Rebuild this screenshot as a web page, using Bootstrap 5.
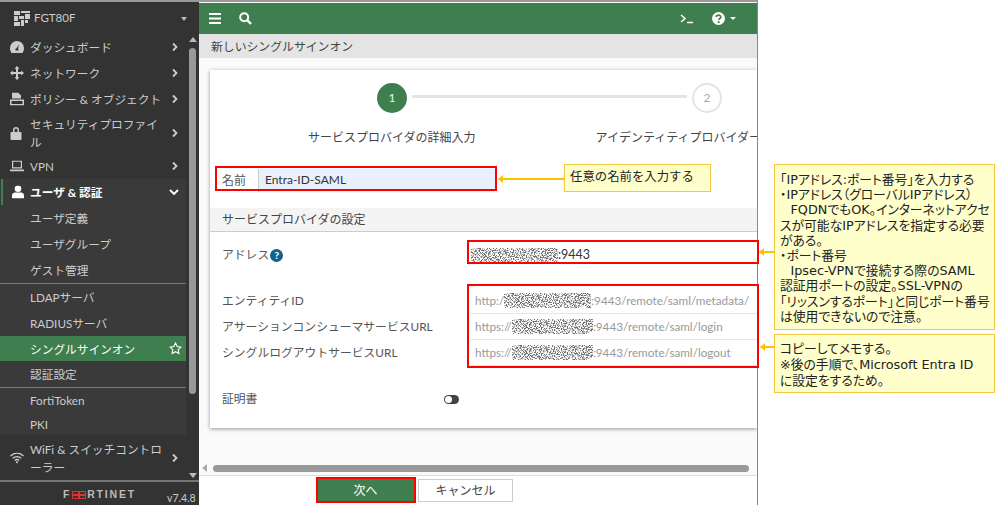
<!DOCTYPE html>
<html lang="ja">
<head>
<meta charset="utf-8">
<title>新しいシングルサインオン</title>
<link rel="stylesheet" href="https://cdn.jsdelivr.net/npm/bootstrap@5.3.0/dist/css/bootstrap.min.css">
<style>
html,body{height:505px;overflow:hidden;}
body{font-family:"Lato","Noto Sans CJK JP",sans-serif;font-size:12px;color:#444;background:#fff;position:relative;}
.shot{height:505px;}
.side{width:199px;height:505px;background:#333;border-top:2px solid #999;color:#ccc;flex:none;position:relative;}
.side-head{height:32px;padding-left:14px;gap:4px;font-size:11.5px;color:#ccc;}
.side-head .caret-d{margin-left:auto;margin-right:12px;width:0;height:0;border:3.5px solid transparent;border-top:4px solid #bbb;margin-top:4px;}
.menu{width:186px;}
.mi{padding:0 24px 0 30px;position:relative;line-height:18px;color:#ccc;height:26px;font-size:11.7px;}
.mi svg.ic{position:absolute;left:10px;top:50%;transform:translateY(-50%);fill:#ccc;}
.mi .chev{position:absolute;right:7px;top:50%;transform:translateY(-50%);}
.h2l{height:41px;}
.h2w{height:45px;}
.subbox{background:#3a3a3a;}
.mi.open{color:#fff;font-weight:700;border-left:2px solid #3f7f4f;margin-left:1px;padding-left:27px;}
.mi.open svg.ic{left:9px;fill:#fff;}
.sub-sep{border-top:1px solid #777;}
.mi.on{background:#3f7e4e;color:#fff;height:25px;}
.mi.s24{height:24px;}
.mi.s23{height:23px;}
.star{position:absolute;right:4px;top:6px;}
.vbar{position:absolute;left:188px;top:32px;width:9px;height:444px;}
.vup{position:absolute;left:1px;top:3px;width:0;height:0;border:4px solid transparent;border-bottom:5px solid #bbb;border-top:0;}
.vdn{position:absolute;left:1px;bottom:0;width:0;height:0;border:4px solid transparent;border-top:5px solid #bbb;border-bottom:0;}
.vth{position:absolute;left:1px;top:14px;width:7px;height:346px;background:#999;border-radius:4px;}
.side-foot{position:absolute;left:0;right:0;top:478px;height:25px;border-top:2px solid #777;}
.ftn{position:absolute;left:63px;top:5px;font-family:"Liberation Sans",sans-serif;font-weight:700;font-size:10.5px;letter-spacing:1.8px;color:#bbb;line-height:14px;}
.ftn i{display:inline-block;width:14px;height:8px;background:linear-gradient(#d33,#d33) center/100% 2px no-repeat,linear-gradient(#d33,#d33) center/2px 100% no-repeat;border:1.5px solid #d33;vertical-align:-0.5px;margin:0 1px;}
.ver{position:absolute;left:167px;top:10px;font-size:10.5px;color:#ccc;line-height:13px;}
.mainp{width:559px;height:505px;flex:none;border-top:2px solid #999;border-right:1px solid #888;background:#fafafa;position:relative;overflow:hidden;}
.topb{height:31px;background:#3f7e4e;margin-top:1px;padding-left:10px;color:#fff;}
.i-search{margin-left:18px;}
.i-term{margin-left:428px;}
.i-help{margin-left:18px;}
.i-caret{margin:3px 0 0 5px;border:3px solid transparent;border-top:3.5px solid #fff;}
.crumb{height:24px;background:#e4e4e4;padding:2px 0 0 12px;font-size:11.85px;color:#444;}
.work{height:418px;padding:12px 0 0 11px;}
.wizard{height:358px;background:#fff;box-shadow:0 1px 4px rgba(0,0,0,.4);overflow:hidden;}
.stepline{height:30px;margin-top:13px;padding-left:167px;}
.circ{width:30px;height:30px;border-radius:50%;flex:none;font-size:12px;}
.circ.act{background:#3f7e4e;color:#dfe;}
.circ.idle{border:2.5px solid #e4e4e4;color:#aaa;background:#fff;}
.conn{width:275px;height:3px;background:#e4e4e4;margin:0 5px 4px;flex:none;}
.steplab{height:18px;margin-top:16px;white-space:nowrap;font-size:12px;color:#444;line-height:18px;}
.steplab span:first-child{margin-left:98px;width:170px;text-align:center;}
.steplab span+span{margin-left:120px;}
.namerow{height:23px;margin:22px 0 0 12px;width:284px;}
.namerow label{width:36px;padding-top:3px;color:#555;margin:0;}
.inp-name{width:237px;height:23px;background:#e8f0fe;border:0;border-left:1px solid #ccc;border-radius:0;padding:0 0 2px 6px;font-size:12px;color:#333;box-shadow:none;font-family:inherit;}
.sec{height:24px;margin-top:16px;background:#f4f4f4;border-bottom:1px solid #ccc;padding-left:12px;line-height:24px;color:#444;font-size:12px;}
.frow{height:26px;padding-left:12px;}
.frow.addr{margin-top:11px;height:24px;}
.frow.cert{margin-top:20px;}
.gap-url{height:21px;}
.frow .lb{width:248px;flex:none;color:#555;font-size:11.8px;white-space:nowrap;}
.frow .val{width:290px;flex:none;height:100%;border-bottom:1px solid #e6e6e6;padding-left:5px;color:#999;font-size:11.7px;font-family:"Lato",sans-serif;white-space:nowrap;}
.addr .val{border:0;color:#333;font-size:12.5px;padding-left:1px;}
.noise{display:inline-block;flex:none;}
.ques{width:13px;height:13px;border-radius:50%;background:#13618f;color:#fff;font-size:10px;font-weight:900;line-height:13px;text-align:center;margin-left:1px;}
.tog{width:15px;height:9px;border-radius:6px;background:#444;margin-left:187px;padding:1px;}
.tog i{display:block;width:7px;height:7px;border-radius:50%;background:#fff;}
.hbar{height:10px;margin-top:35px;padding-left:3px;margin-left:-11px;}
.hbar b{display:block;width:0;height:0;border:4px solid transparent;border-right:5px solid #aaa;border-left:0;}
.hbar i{display:block;width:536px;height:7px;background:#999;border-radius:4px;margin-left:6px;}
.foot{position:absolute;left:0;right:0;top:473px;height:30px;background:#fff;border-top:1px solid #ddd;gap:3px;padding-left:117px;padding-top:3px;}
.btn-next{width:99px;height:23px;background:#3f7e4e;color:#fff;border:0;border-radius:0;font-size:12px;padding:0;line-height:23px;}
.btn-cancel{width:95px;height:23px;background:#fff;color:#444;border:1px solid #ccc;border-radius:0;font-size:12px;padding:0;line-height:21px;}
.redbox{position:absolute;border:2px solid #f00;pointer-events:none;}
.r1{left:215px;top:166px;width:282px;height:25px;}
.r2{left:467px;top:240px;width:292px;height:24px;}
.r3{left:467px;top:284px;width:292px;height:84px;}
.r4{left:316px;top:477px;width:100px;height:26px;}
.call{position:absolute;background:#ffffcc;border:1px solid #f5c842;font-family:"DejaVu Sans","Noto Sans CJK JP",sans-serif;font-feature-settings:"palt";color:#222;font-size:12.8px;line-height:15.2px;padding:7px 0 0 5px;white-space:nowrap;overflow:hidden;}
.c1{left:564px;top:164px;width:147px;height:28px;font-family:"Noto Sans CJK JP",sans-serif;font-feature-settings:normal;font-size:12.4px;padding:4px 0 0 5px;}
.c2{left:774px;top:164px;width:221px;height:166px;}
.c3{left:774px;top:334px;width:221px;height:59px;line-height:16px;padding-top:6px;}
.arr{position:absolute;height:2px;background:#ffc000;}
.arr::before{content:"";position:absolute;left:-5px;top:-3px;width:0;height:0;border:4px solid transparent;border-right:5px solid #ffc000;border-left:0;}
.a1{left:503px;top:178px;width:61px;}
.a2{left:764px;top:251px;width:10px;}
.a3{left:765px;top:346px;width:9px;}
</style>
</head>
<body>
<svg width="0" height="0" class="position-absolute"><defs>
<filter id="nz" x="0" y="0" width="100%" height="100%"><feTurbulence type="fractalNoise" baseFrequency="0.85" numOctaves="2" seed="7"/><feColorMatrix values="0 0 0 0 .15  0 0 0 0 .15  0 0 0 0 .15  6 0 0 0 -2.700"/></filter>
<symbol id="chev" viewBox="0 0 8 10"><path d="M2 1.500 5.500 5 2 8.500" fill="none" stroke="#ccc" stroke-width="1.800"/></symbol>
</defs></svg>
<div class="shot d-flex">
  <aside class="side">
    <div class="side-head d-flex align-items-center">
      <svg width="16" height="15" viewBox="0 0 16 15" fill="#ccc"><path d="M0 0h6v4H0zM7 0h9v2H7zM0 5h4v5H0zM5 5h5v3H5zM11 3h5v5h-5zM0 11h6v4H0zM7 9h3v6H7zM11 9h3v3h-3z"/></svg>
      <span>FGT80F</span><span class="caret-d"></span>
    </div>
    <nav class="menu d-flex flex-column">
      <div class="mi d-flex align-items-center"><svg class="ic" width="14" height="12" viewBox="0 0 14 12"><path d="M7 0a7 7 0 0 0-7 7c0 2 .6 3.500 1.500 5h11c.9-1.500 1.500-3 1.500-5a7 7 0 0 0-7-7zm1.200 9.500H5.800a1.300 1.300 0 0 1 .7-2.300L9 3.500l-1 4a1.300 1.300 0 0 1 .2 2z" fill-rule="evenodd"/></svg>ダッシュボード<svg class="chev" width="8" height="10"><use href="#chev"/></svg></div>
      <div class="mi d-flex align-items-center"><svg class="ic" width="14" height="14" viewBox="0 0 14 14"><path d="M7 0l2.500 2.800H8V6h3.200V4.500L14 7l-2.800 2.500V8H8v3.200h1.500L7 14l-2.500-2.800H6V8H2.800v1.500L0 7l2.800-2.500V6H6V2.800H4.500z"/></svg>ネットワーク<svg class="chev" width="8" height="10"><use href="#chev"/></svg></div>
      <div class="mi d-flex align-items-center"><svg class="ic" width="14" height="13" viewBox="0 0 14 13"><path d="M2 0h6l3 3v3H2zM0 7h14v6H0zm1.500 1.500v3h11v-3z" fill-rule="evenodd"/></svg>ポリシー &amp; オブジェクト<svg class="chev" width="8" height="10"><use href="#chev"/></svg></div>
      <div class="mi d-flex align-items-center h2l"><svg class="ic" width="12" height="14" viewBox="0 0 12 14"><path d="M3 6V4a3 3 0 0 1 6 0v2h1.500a1 1 0 0 1 1 1v6a1 1 0 0 1-1 1h-9a1 1 0 0 1-1-1V7a1 1 0 0 1 1-1zm1.500 0h3V4a1.500 1.500 0 0 0-3 0z" fill-rule="evenodd"/></svg>セキュリティプロファイル<svg class="chev" width="8" height="10"><use href="#chev"/></svg></div>
      <div class="mi d-flex align-items-center"><svg class="ic" width="14" height="11" viewBox="0 0 14 11"><path d="M2 0h10v8H2zm1.200 1.200v5.600h7.600V1.200zM0 9h14v2H0z" fill-rule="evenodd"/></svg>VPN<svg class="chev" width="8" height="10"><use href="#chev"/></svg></div>
      <div class="subbox">
        <div class="mi open d-flex align-items-center"><svg class="ic" width="12" height="13" viewBox="0 0 12 13"><circle cx="6" cy="3.300" r="3.300"/><path d="M0 13v-3c0-2 1.500-3 3-3h6c1.500 0 3 1 3 3v3z"/></svg>ユーザ &amp; 認証<svg class="chev" width="10" height="8" viewBox="0 0 10 8"><path d="M1 2l4 4 4-4" fill="none" stroke="#fff" stroke-width="1.800"/></svg></div>
        <div class="mi d-flex align-items-center">ユーザ定義</div>
        <div class="mi d-flex align-items-center">ユーザグループ</div>
        <div class="mi d-flex align-items-center">ゲスト管理</div>
        <div class="sub-sep"></div>
        <div class="mi d-flex align-items-center">LDAPサーバ</div>
        <div class="mi d-flex align-items-center">RADIUSサーバ</div>
        <div class="mi on d-flex align-items-center">シングルサインオン<svg class="star" width="13" height="13" viewBox="0 0 14 14"><path d="M7 1.200l1.800 3.700 4 .6-2.900 2.800.7 4L7 10.400l-3.600 1.900.7-4-2.900-2.800 4-.6z" fill="none" stroke="#fff" stroke-width="1.200"/></svg></div>
        <div class="mi d-flex align-items-center">認証設定</div>
        <div class="sub-sep"></div>
        <div class="mi s24 d-flex align-items-center">FortiToken</div>
        <div class="mi s23 d-flex align-items-center">PKI</div>
      </div>
      <div class="mi d-flex align-items-center h2w"><svg class="ic" width="14" height="11" viewBox="0 0 14 11"><path d="M.5 3.500a9 9 0 0 1 13 0M2.700 5.900a6 6 0 0 1 8.600 0M4.900 8a3 3 0 0 1 4.200 0" fill="none" stroke="#ccc" stroke-width="1.300"/><circle cx="7" cy="9.800" r="1.100"/></svg>WiFi &amp; スイッチコントローラー<svg class="chev" width="8" height="10"><use href="#chev"/></svg></div>
    </nav>
    <div class="vbar"><span class="vup"></span><span class="vth"></span><span class="vdn"></span></div>
    <div class="side-foot"><span class="ftn">F<i></i>RTINET</span><span class="ver">v7.4.8</span></div>
  </aside>
  <main class="mainp">
    <div class="topb d-flex align-items-center">
      <svg width="12" height="11" viewBox="0 0 12 11" fill="#fff"><path d="M0 0h12v2H0zM0 4.500h12v2H0zM0 9h12v2H0z"/></svg>
      <svg class="i-search" width="13" height="13" viewBox="0 0 13 13"><circle cx="5.200" cy="5.200" r="4" fill="none" stroke="#fff" stroke-width="2"/><path d="M8.200 8.200 12 12" stroke="#fff" stroke-width="2.400"/></svg>
      <svg class="i-term" width="14" height="10" viewBox="0 0 14 10"><path d="M1 1l4 3.500L1 8" fill="none" stroke="#fff" stroke-width="1.500"/><path d="M7 8.500h6" stroke="#fff" stroke-width="1.500"/></svg>
      <svg class="i-help" width="13" height="13" viewBox="0 0 13 13"><circle cx="6.500" cy="6.500" r="6.500" fill="#fff"/><path d="M4.300 5c.1-2.500 4.500-2.600 4.500 0 0 1.700-2.100 1.600-2.100 3" fill="none" stroke="#3f7e4e" stroke-width="1.700"/><circle cx="6.700" cy="10" r="1.100" fill="#3f7e4e"/></svg>
      <span class="i-caret"></span>
    </div>
    <div class="crumb d-flex align-items-center">新しいシングルサインオン</div>
    <div class="work">
      <div class="wizard">
        <div class="stepline d-flex align-items-center">
          <div class="circ act d-flex align-items-center justify-content-center">1</div>
          <div class="conn"></div>
          <div class="circ idle d-flex align-items-center justify-content-center">2</div>
        </div>
        <div class="steplab d-flex"><span>サービスプロバイダの詳細入力</span><span>アイデンティティプロバイダーの詳細入力</span></div>
        <div class="namerow d-flex">
          <label for="nm">名前</label>
          <input id="nm" class="form-control inp-name" value="Entra-ID-SAML">
        </div>
        <div class="sec">サービスプロバイダの設定</div>
        <div class="frow addr d-flex align-items-center">
          <div class="lb d-flex align-items-center">アドレス<span class="ques">?</span></div>
          <div class="val d-flex align-items-center"><svg class="noise" width="87" height="15"><rect width="87" height="15" rx="6" filter="url(#nz)"/></svg>:9443</div>
        </div>
        <div class="gap-url"></div>
        <div class="frow d-flex align-items-center">
          <div class="lb">エンティティID</div>
          <div class="val d-flex align-items-center">http:/<svg class="noise" width="87" height="15"><rect width="87" height="15" rx="6" filter="url(#nz)"/></svg>:9443/remote/saml/metadata/</div>
        </div>
        <div class="frow d-flex align-items-center">
          <div class="lb">アサーションコンシューマサービスURL</div>
          <div class="val d-flex align-items-center">https://<svg class="noise" width="81" height="15"><rect width="81" height="15" rx="6" filter="url(#nz)"/></svg>:9443/remote/saml/login</div>
        </div>
        <div class="frow d-flex align-items-center">
          <div class="lb">シングルログアウトサービスURL</div>
          <div class="val d-flex align-items-center">https://<svg class="noise" width="81" height="15"><rect width="81" height="15" rx="6" filter="url(#nz)"/></svg>:9443/remote/saml/logout</div>
        </div>
        <div class="frow cert d-flex align-items-center">
          <div class="lb d-flex align-items-center">証明書<span class="tog"><i></i></span></div>
        </div>
      </div>
      <div class="hbar d-flex align-items-center"><b></b><i></i></div>
    </div>
    <div class="foot d-flex align-items-start">
      <button class="btn btn-next" type="button">次へ</button>
      <button class="btn btn-cancel" type="button">キャンセル</button>
    </div>
  </main>
</div>
<div class="redbox r1"></div><div class="redbox r2"></div><div class="redbox r3"></div><div class="redbox r4"></div>
<div class="arr a1"></div><div class="arr a2"></div><div class="arr a3"></div>
<div class="call c1">任意の名前を入力する</div>
<div class="call c2">「IPアドレス:ポート番号」を入力する<br>・IPアドレス（グローバルIPアドレス）<br>&ensp;&nbsp;FQDNでもOK。インターネットアクセ<br>スが可能なIPアドレスを指定する必要<br>がある。<br>・ポート番号<br>&ensp;&nbsp;Ipsec-VPNで接続する際のSAML<br>認証用ポートの設定。SSL-VPNの<br>「リッスンするポート」と同じポート番号<br>は使用できないので注意。</div>
<div class="call c3">コピーしてメモする。<br>※後の手順で、Microsoft Entra ID<br>に設定をするため。</div>
<script src="https://cdn.jsdelivr.net/npm/bootstrap@5.3.0/dist/js/bootstrap.bundle.min.js"></script>
</body>
</html>
